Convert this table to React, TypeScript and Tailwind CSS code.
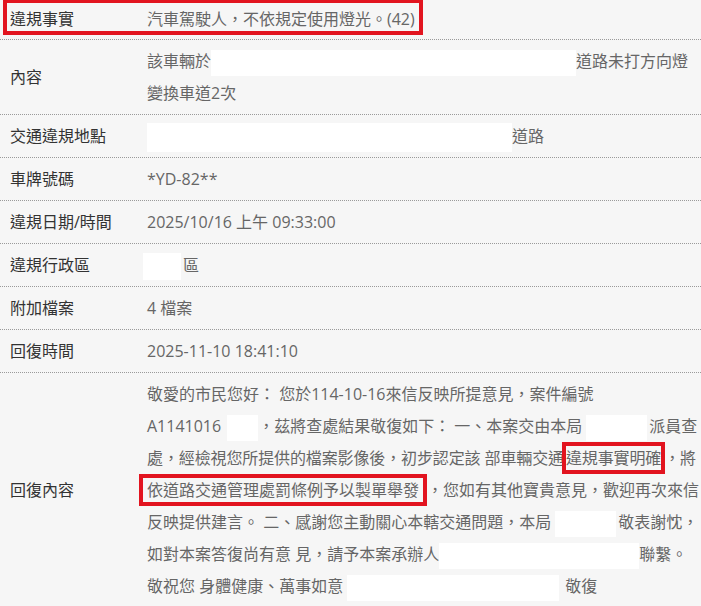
const font = { fontFamily: '"Open Sans", "Noto Sans CJK TC", sans-serif' }

const Blank = ({ w, h = 27, className = "" }: { w: number; h?: number; className?: string }) => (
  <span className={`inline-block bg-white align-middle ${className}`} style={{ width: w, height: h }} />
)

const Row = ({ label, children, className = "" }: { label: string; children: React.ReactNode; className?: string }) => (
  <div className={`grid grid-cols-[147px_1fr] border-b border-dotted border-[#9a9a9a] leading-[32px] ${className}`}>
    <div className="pl-[10px] text-[#333] self-center">{label}</div>
    <div className="text-[#666] pr-2">{children}</div>
  </div>
)

const Mark = ({ children, className = "" }: { children: React.ReactNode; className?: string }) => (
  <span className={`inline-block border-4 border-[#e2141f] leading-[24px] align-top ${className}`}>{children}</span>
)

export default function App() {
  return (
    <div className="w-[701px] h-[606px] overflow-hidden bg-[#f6f6f6] text-[16px]" style={font}>
      <div className="relative">
        <Row label="違規事實" className="pt-[3px] pb-[4px]">
          汽車駕駛人，不依規定使用燈光。(42)
        </Row>
        <div className="absolute left-[3px] top-[-1px] w-[420px] h-[36px] border-4 border-[#e2141f]" />
      </div>
      <Row label="內容" className="py-[5px]">
        <div>
          該車輛於
          <Blank w={365} h={26} />
          道路未打方向燈
        </div>
        <div>變換車道2次</div>
      </Row>
      <Row label="交通違規地點" className="py-[5px]">
        <Blank w={365} h={29} />
        道路
      </Row>
      <Row label="車牌號碼" className="py-[5px]">
        *YD-82**
      </Row>
      <Row label="違規日期/時間" className="py-[5px]">
        2025/10/16 上午 09:33:00
      </Row>
      <Row label="違規行政區" className="py-[5px]">
        <Blank w={38} h={27} className="ml-[-4px] mr-[2px]" />
        區
      </Row>
      <Row label="附加檔案" className="py-[5px]">
        4 檔案
      </Row>
      <Row label="回復時間" className="py-[5px]">
        2025-11-10 18:41:10
      </Row>
      <Row label="回復內容" className="py-[5px]">
        <div className="whitespace-nowrap">敬愛的市民您好： 您於114-10-16來信反映所提意見，案件編號</div>
        <div className="whitespace-nowrap">
          A1141016
          <Blank w={31} h={26} className="ml-[6px]" />
          ，茲將查處結果敬復如下： 一、本案交由本局
          <Blank w={61} h={26} className="ml-[4px] mr-[2px]" />
          派員查
        </div>
        <div className="whitespace-nowrap tracking-[-0.12px]">
          處，經檢視您所提供的檔案影像後，初步認定該 部車輛交通
          <Mark className="ml-[-2px] mr-[-1px]">違規事實明確</Mark>，將
        </div>
        <div className="whitespace-nowrap">
          <Mark className="ml-[-8px] px-[4px]">依道路交通管理處罰條例予以製單舉發</Mark>，您如有其他寶貴意見，歡迎再次來信
        </div>
        <div className="whitespace-nowrap">
          反映提供建言。 二、感謝您主動關心本轄交通問題，本局
          <Blank w={61} h={26} className="ml-[4px] mr-[2px]" />
          敬表謝忱，
        </div>
        <div className="whitespace-nowrap">
          如對本案答復尚有意 見，請予本案承辦人
          <Blank w={200} h={26} />
          聯繫。
        </div>
        <div className="whitespace-nowrap">
          敬祝您 身體健康、萬事如意
          <Blank w={212} h={26} className="ml-[4px] mr-[6px]" />
          敬復
        </div>
      </Row>
    </div>
  )
}
